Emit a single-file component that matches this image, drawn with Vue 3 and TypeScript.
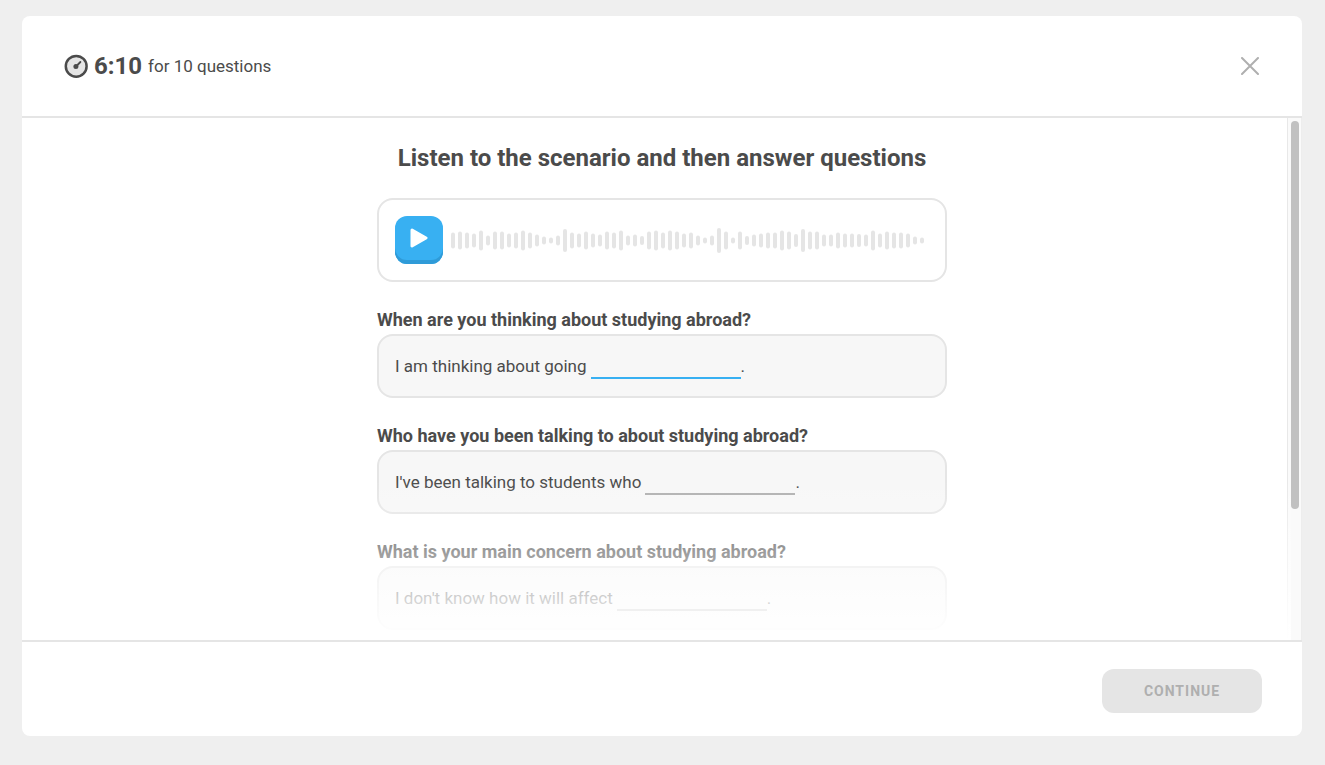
<script setup lang="ts">
interface Question {
  id: string
  prompt: string
  lead: string
}

const questions: Question[] = [
  { id: 'when', prompt: 'When are you thinking about studying abroad?', lead: 'I am thinking about going' },
  { id: 'who', prompt: 'Who have you been talking to about studying abroad?', lead: "I've been talking to students who" },
  { id: 'concern', prompt: 'What is your main concern about studying abroad?', lead: "I don't know how it will affect" },
]

const barPitch = 7
const waveHeight = 28
const waveMiddle = 14.5
const bars: number[] = [
  16, 18, 16, 14, 20, 10, 18, 18, 14, 16, 20, 16, 12, 8, 6, 10, 23,
  16, 14, 18, 14, 12, 18, 16, 20, 10, 12, 9, 18, 20, 16, 20, 18, 14,
  16, 10, 6, 10, 25, 18, 6, 18, 9, 12, 14, 16, 16, 20, 18, 13, 23,
  18, 18, 12, 12, 16, 14, 14, 13, 12, 20, 14, 18, 16, 16, 14, 8, 6,
]
const waveWidth = bars.length * barPitch
</script>

<template>
  <div class="page">
    <section class="card">
      <header class="head">
        <div class="timer">
          <svg class="clock" viewBox="0 0 24 24" width="24" height="24" aria-hidden="true">
            <circle cx="12.2" cy="12.3" r="10.4" fill="#e5e5e5" stroke="#4b4b4b" stroke-width="2.5" />
            <circle cx="11.9" cy="12.6" r="2.5" fill="#4b4b4b" />
            <path d="M12 12.5 16.4 8" stroke="#4b4b4b" stroke-width="1.8" stroke-linecap="round" />
          </svg>
          <strong class="time">6:10</strong>
          <span class="count">for 10 questions</span>
        </div>
        <button class="close" type="button" aria-label="Close">
          <svg viewBox="0 0 18 18" width="18" height="18" aria-hidden="true">
            <path d="M1 1 17 17M17 1 1 17" stroke="#afafaf" stroke-width="2" stroke-linecap="round" />
          </svg>
        </button>
      </header>

      <div class="body">
        <main class="scroller">
          <div class="column">
            <h1 class="title">Listen to the scenario and then answer questions</h1>
            <div class="player">
              <button class="play" type="button" aria-label="Play">
                <svg viewBox="0 0 18 20" width="18" height="20" aria-hidden="true">
                  <path d="M2 2 16 10 2 18Z" fill="#fff" stroke="#fff" stroke-width="3" stroke-linejoin="round" />
                </svg>
              </button>
              <svg class="wave" :viewBox="`0 0 ${waveWidth} ${waveHeight}`" :width="waveWidth" :height="waveHeight" aria-hidden="true">
                <rect
                  v-for="(h, i) in bars"
                  :key="i"
                  :x="i * barPitch"
                  :y="waveMiddle - h / 2"
                  width="4"
                  :height="h"
                  rx="2"
                  fill="#e5e5e5"
                />
              </svg>
            </div>
            <form class="questions" @submit.prevent>
              <div v-for="q in questions" :key="q.id" class="question">
                <label class="prompt" :for="q.id">{{ q.prompt }}</label>
                <div class="answer">
                  <span>{{ q.lead }}</span>
                  <input :id="q.id" class="blank" :class="{ active: q.id === 'when' }" type="text" autocomplete="off" />
                  <span>.</span>
                </div>
              </div>
            </form>
          </div>
        </main>
        <div class="track"><div class="thumb"></div></div>
        <div class="fade"></div>
      </div>

      <footer class="foot">
        <button class="continue" type="button" disabled>CONTINUE</button>
      </footer>
    </section>
  </div>
</template>

<style>
body {
  background: #efefef;
}
</style>

<style scoped>
* {
  box-sizing: border-box;
}
.page {
  height: 100vh;
  padding: 16px 23px 29px 22px;
  background: #efefef;
  color: #4b4b4b;
  font-family: Roboto, "Liberation Sans", sans-serif;
}
.card {
  display: flex;
  flex-direction: column;
  height: 100%;
  background: #fff;
  border-radius: 8px;
  overflow: hidden;
}
.head {
  display: flex;
  flex: none;
  align-items: center;
  justify-content: space-between;
  padding: 36px 43px 36px 42px;
  border-bottom: 2px solid #e5e5e5;
}
.timer {
  display: flex;
  align-items: center;
  gap: 6px;
}
.clock {
  display: block;
}
.time {
  font-size: 24px;
  line-height: 28px;
  font-weight: 700;
}
.count {
  font-size: 17px;
  line-height: 28px;
}
.close {
  display: flex;
  padding: 0;
  border: 0;
  background: none;
}
.body {
  position: relative;
  flex: 1;
  min-height: 0;
}
.scroller {
  height: 100%;
  overflow-y: auto;
  scrollbar-width: none;
}
.column {
  width: 100%;
  max-width: 570px;
  margin: 0 auto;
  padding: 24px 0 120px;
}
.title {
  margin: 0 0 24px;
  font-size: 24px;
  line-height: 32px;
  font-weight: 700;
  text-align: center;
  white-space: nowrap;
}
.player {
  display: flex;
  align-items: center;
  gap: 8px;
  padding: 16px;
  border: 2px solid #e5e5e5;
  border-radius: 16px;
}
.play {
  display: flex;
  flex: none;
  align-items: center;
  justify-content: center;
  width: 48px;
  height: 48px;
  padding: 0 0 4px;
  border: 0;
  border-radius: 12px;
  background: #38b0f2;
  box-shadow: inset 0 -4px 0 #2f9bd8;
}
.wave {
  display: block;
}
.questions {
  display: flex;
  flex-direction: column;
  gap: 24px;
  margin-top: 24px;
}
.prompt {
  display: block;
  font-size: 18px;
  line-height: 28px;
  font-weight: 700;
}
.answer {
  display: flex;
  align-items: center;
  height: 64px;
  padding: 0 16px;
  border: 2px solid #e5e5e5;
  border-radius: 16px;
  background: #f7f7f7;
  font-size: 17px;
  line-height: 28px;
}
.blank {
  width: 150px;
  height: 26px;
  margin-left: 4px;
  padding: 0;
  border: 0;
  border-bottom: 2px solid #afafaf;
  border-radius: 0;
  background: none;
  color: inherit;
  font: inherit;
  outline: none;
}
.blank.active {
  border-color: #38b0f2;
}
.track {
  position: absolute;
  top: 0;
  right: 0;
  bottom: 0;
  width: 15px;
  padding: 3px;
  border-left: 1px solid #e8e8e8;
  border-right: 1px solid #ededed;
  background: #fafafa;
}
.thumb {
  width: 8px;
  height: 388px;
  border-radius: 4px;
  background: #c1c1c1;
}
.fade {
  position: absolute;
  left: 0;
  right: 11px;
  bottom: 0;
  height: 160px;
  background: linear-gradient(rgba(255, 255, 255, 0), #fff);
  pointer-events: none;
}
.foot {
  display: flex;
  flex: none;
  justify-content: flex-end;
  padding: 27px 40px 23px;
  border-top: 2px solid #e5e5e5;
}
.continue {
  width: 160px;
  height: 44px;
  padding: 0;
  border: 0;
  border-radius: 12px;
  background: #e5e5e5;
  color: #afafaf;
  font-family: inherit;
  font-size: 14px;
  font-weight: 700;
  letter-spacing: 1px;
}
</style>
